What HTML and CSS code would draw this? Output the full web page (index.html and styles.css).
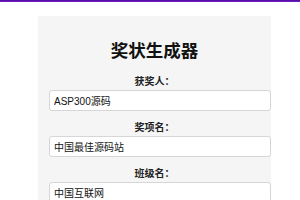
FILE: index.html
```html
<!DOCTYPE html>
<html lang="zh">
<head>
<meta charset="utf-8">
<title>奖状生成器</title>
<link rel="stylesheet" href="styles.css">
</head>
<body>
<div class="topbar"></div>
<main class="card">
  <h1 class="title">奖状生成器</h1>
  <div class="field">
    <label class="label" for="winner">获奖人：</label>
    <input class="input" id="winner" type="text" value="ASP300源码">
  </div>
  <div class="field">
    <label class="label" for="award">奖项名：</label>
    <input class="input" id="award" type="text" value="中国最佳源码站">
  </div>
  <div class="field">
    <label class="label" for="class">班级名：</label>
    <input class="input" id="class" type="text" value="中国互联网">
  </div>
</main>
</body>
</html>
```
FILE: styles.css
```css
html, body {
  margin: 0;
  padding: 0;
  background: #ffffff;
  font-family: "Liberation Sans", "Noto Sans CJK SC", sans-serif;
  color: #111;
}
.topbar {
  height: 2px;
  background: linear-gradient(180deg, #4b0a8c 0%, #7b1fd6 100%);
}
.card {
  width: 211px;
  margin: 14px 0 0 38px;
  padding: 23px 11px 20px;
  background: #f5f5f5;
  min-height: 300px;
}
.title {
  margin: 0 0 12px;
  font-size: 17.5px;
  line-height: 24px;
  font-weight: 700;
  text-align: center;
  color: #111;
}
.field {
  display: flex;
  flex-direction: column;
}
.field + .field {
  margin-top: 10px;
}
.label {
  display: block;
  text-align: center;
  font-size: 10px;
  line-height: 14px;
  font-weight: 700;
  margin-bottom: 1px;
  color: #222;
}
.input {
  box-sizing: content-box;
  width: 100%;
  height: 19px;
  padding: 0 5px 0 4px;
  margin-right: -1px;
  border: 1px solid #d6d6d6;
  border-radius: 3px;
  background: #fff;
  font-family: "Liberation Sans", "Noto Sans CJK SC", sans-serif;
  font-size: 10px;
  color: #111;
  outline: none;
}
```
